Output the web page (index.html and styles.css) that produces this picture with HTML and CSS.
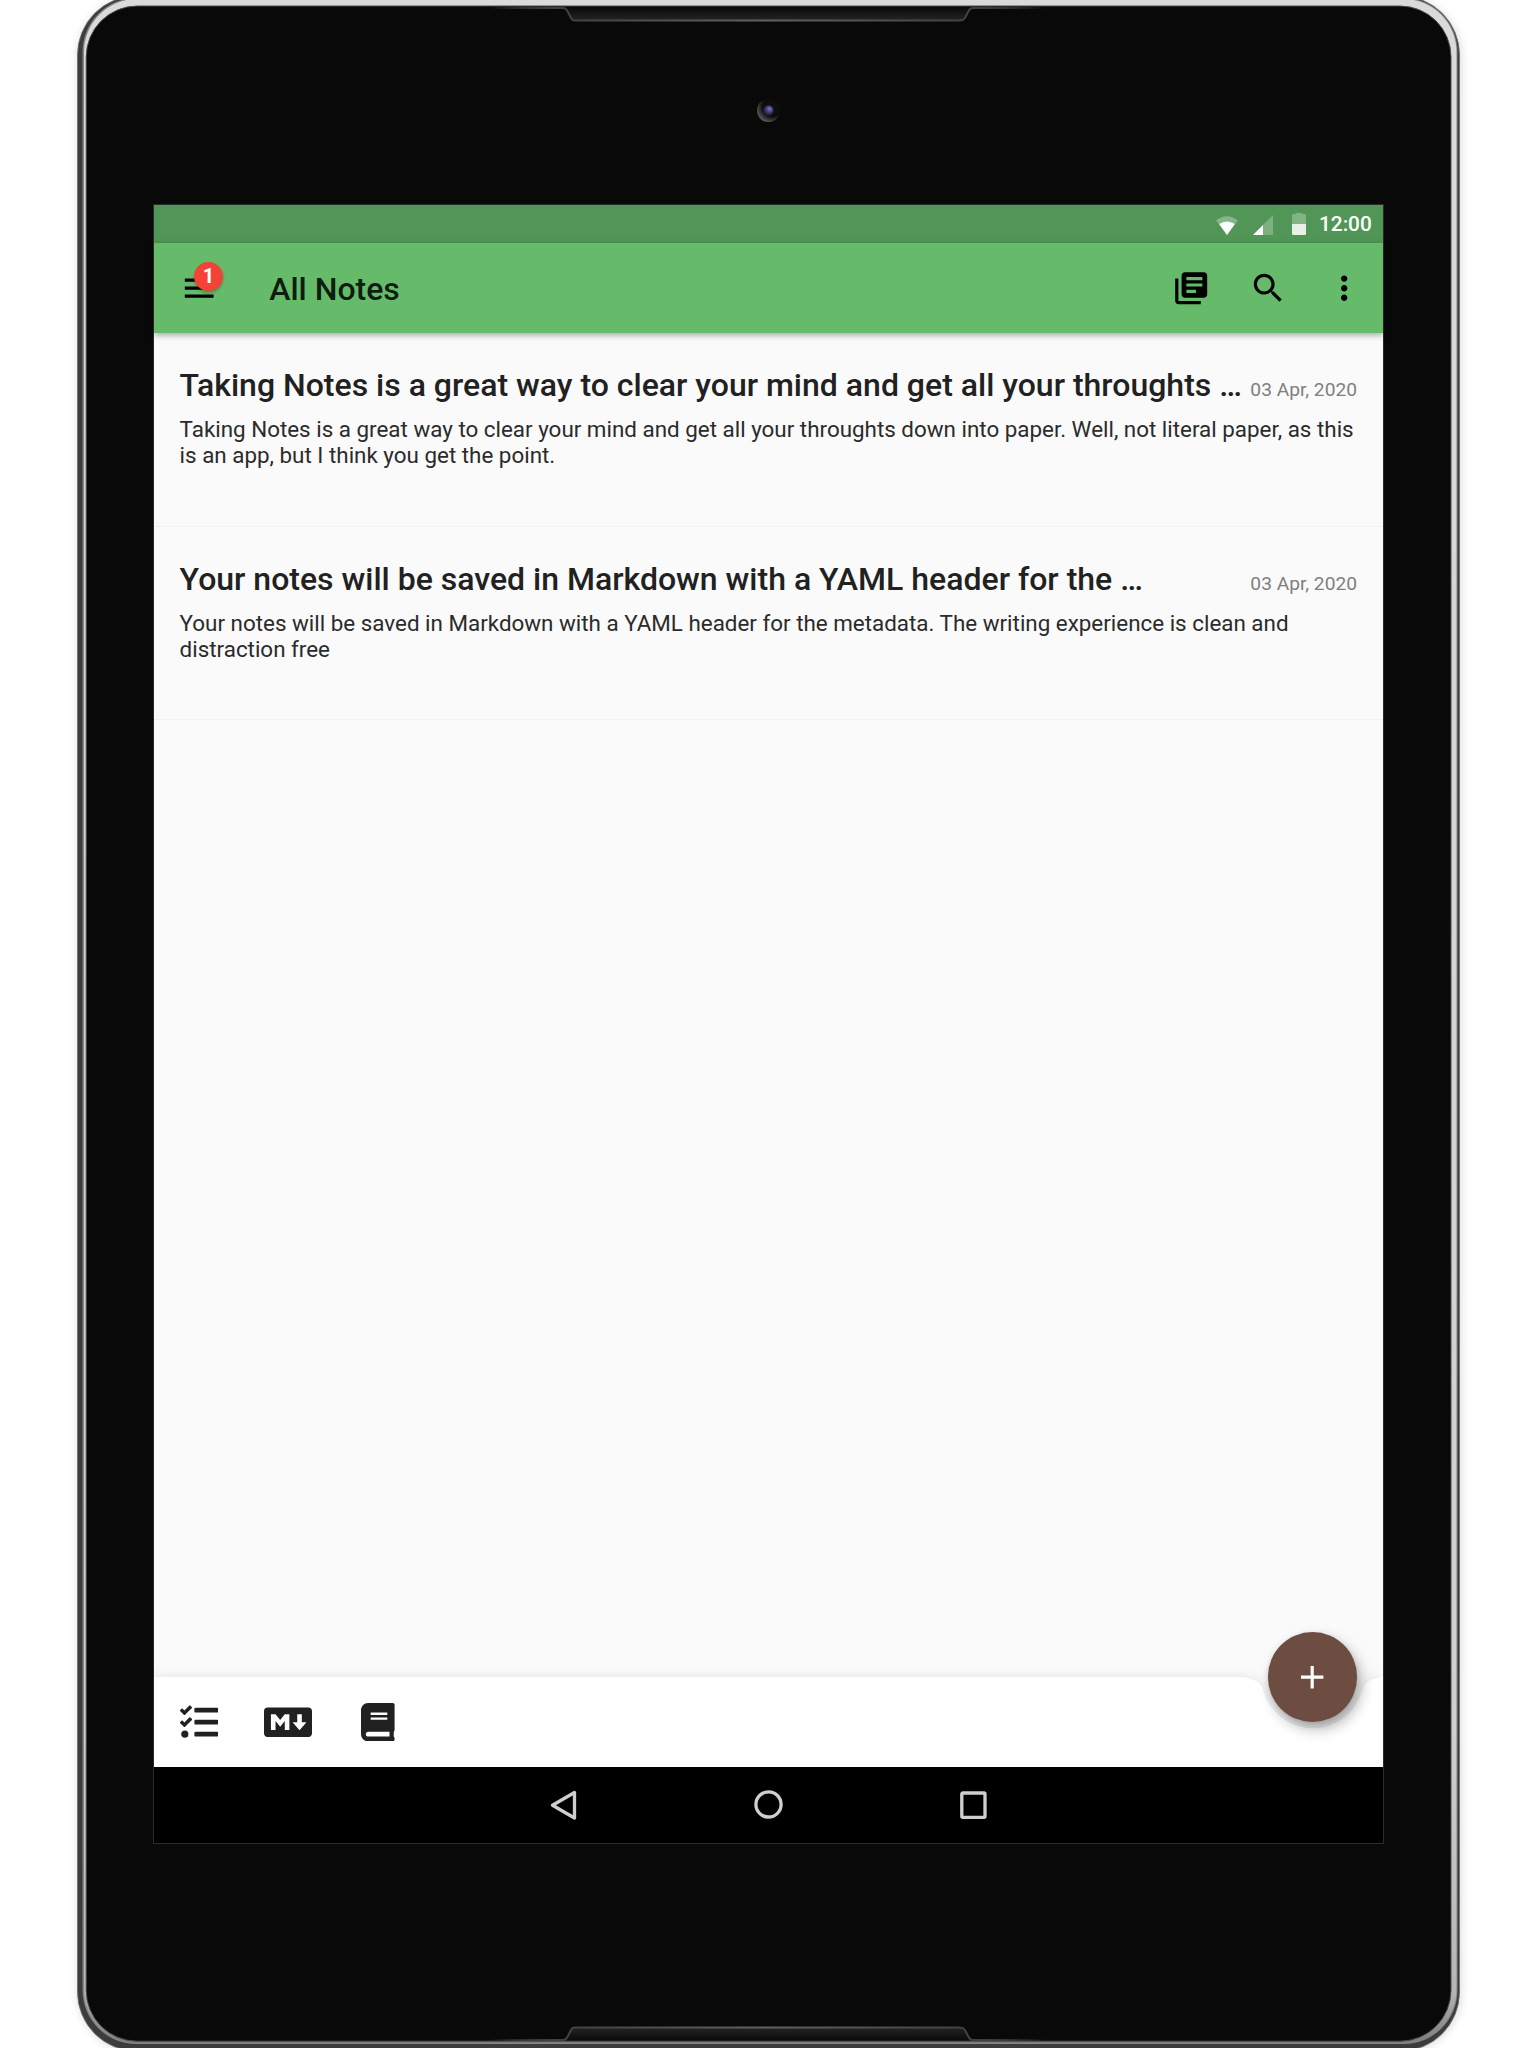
FILE: index.html
```html
<!DOCTYPE html>
<html lang="en">
<head>
<meta charset="utf-8">
<title>All Notes</title>
<link rel="stylesheet" href="styles.css">
</head>
<body>
<div class="device">
  <svg class="frame" width="1536" height="2048" viewBox="0 0 1536 2048" aria-hidden="true">
    <defs>
      <linearGradient id="rim" x1="0" y1="0" x2="0" y2="1"><stop offset="0" stop-color="#dadada"/><stop offset=".85" stop-color="#cfcfcf"/><stop offset=".975" stop-color="#b5b5b5"/><stop offset="1" stop-color="#7c7c7c"/></linearGradient>
      <linearGradient id="slot" x1="0" y1="0" x2="0" y2="1"><stop offset="0" stop-color="#0b0b0b"/><stop offset="1" stop-color="#242424"/></linearGradient>
      <linearGradient id="slot-low" x1="0" y1="1" x2="0" y2="0"><stop offset="0" stop-color="#0b0b0b"/><stop offset="1" stop-color="#242424"/></linearGradient>
      <linearGradient id="edge" x1="0" y1="0" x2="1" y2="0"><stop offset="0" stop-color="#666" stop-opacity="0"/><stop offset=".12" stop-color="#404040"/><stop offset=".5" stop-color="#606060"/><stop offset=".88" stop-color="#404040"/><stop offset="1" stop-color="#666" stop-opacity="0"/></linearGradient>
      <radialGradient id="lens" cx=".68" cy=".32" r=".8"><stop offset=".55" stop-color="#0d0d0d"/><stop offset="1" stop-color="#6a6a6a"/></radialGradient>
      <radialGradient id="glass" cx=".6" cy=".35" r=".6"><stop offset="0" stop-color="#8278b4"/><stop offset=".5" stop-color="#3c4480"/><stop offset="1" stop-color="#20213c"/></radialGradient>
    </defs>
    <rect x="77.5" y="-4" width="1382" height="2055" rx="59" fill="#3c3c3c" stroke="#6d6d6d" stroke-width=".8"/>
    <rect x="82.5" y="-2" width="1375" height="2046" rx="54" fill="#858585"/>
    <rect x="84" y="-1" width="1372.5" height="2044" rx="53" fill="url(#rim)"/>
    <rect x="86.2" y="6" width="1364.8" height="2035.200" rx="51" fill="#090909" stroke="#4a4d4a" stroke-width="1"/>
    <path d="M490 8H563Q566 8 568 12L571 18Q572 20.500 575 20.500H960Q963 20.500 965 18L968 12Q970 8 973 8H1045" fill="url(#slot)" stroke="url(#edge)" stroke-width="2"/>
    <path d="M490 2040H563Q566 2040 568 2036L571 2030Q572 2027.500 575 2027.500H960Q963 2027.500 965 2030L968 2036Q970 2040 973 2040H1045" fill="url(#slot-low)" stroke="url(#edge)" stroke-width="2"/>
    <circle cx="768.5" cy="110.500" r="11.500" fill="url(#lens)"/>
    <circle cx="768.5" cy="110.500" r="5" fill="url(#glass)"/>
  </svg>
  <main class="screen">
    <div class="status">
      <svg class="wifi" width="22" height="19" viewBox="0 0 22 19"><path d="M0 4.500Q11-4 22 4.500L11 19z" fill="#fff" opacity=".3"/><path d="M3.200 8Q11 3 18.800 8L11 19z" fill="#fff"/></svg>
      <svg class="signal" width="20" height="20" viewBox="0 0 20 20"><path d="M20 0V20H0z" fill="#fff" opacity=".25"/><path d="M10 10V20H0z" fill="#fff"/></svg>
      <svg class="battery" width="14" height="22" viewBox="0 0 14 22"><path d="M4 0H10V1H12.500Q14 1 14 2.500V11H0V2.500Q0 1 1.500 1H4z" fill="#fff" opacity=".28"/><path d="M0 11H14V20.500Q14 22 12.500 22H1.500Q0 22 0 20.500z" fill="#e9f0e9"/></svg>
      <span class="clock">12:00</span>
    </div>
    <header class="appbar">
      <div class="menu">
        <svg class="icon" viewBox="0 0 24 24"><path d="M3 18h18v-2H3v2zm0-5h18v-2H3v2zm0-7v2h18V6H3z"/></svg>
        <span class="badge">1</span>
      </div>
      <h1 class="heading">All Notes</h1>
      <div class="action"><svg class="icon" viewBox="0 0 24 24"><path d="M4 6H2v14c0 1.100.9 2 2 2h14v-2H4V6zm16-4H8c-1.100 0-2 .9-2 2v12c0 1.100.9 2 2 2h12c1.100 0 2-.9 2-2V4c0-1.100-.9-2-2-2zm-1 9H9V9h10v2zm-4 4H9v-2h6v2zm4-8H9V5h10v2z"/></svg></div>
      <div class="action"><svg class="icon" viewBox="0 0 24 24"><path d="M15.500 14h-.79l-.28-.27C15.410 12.590 16 11.110 16 9.500 16 5.910 13.090 3 9.500 3S3 5.910 3 9.500 5.910 16 9.500 16c1.610 0 3.090-.59 4.230-1.570l.27.28v.79l5 4.990L20.490 19l-4.990-5zm-6 0C7.010 14 5 11.990 5 9.500S7.010 5 9.500 5 14 7.010 14 9.500 11.990 14 9.500 14z"/></svg></div>
      <div class="action"><svg class="icon" viewBox="0 0 24 24"><path d="M12 8c1.100 0 2-.9 2-2s-.9-2-2-2-2 .9-2 2 .9 2 2 2zm0 2c-1.100 0-2 .9-2 2s.9 2 2 2 2-.9 2-2-.9-2-2-2zm0 6c-1.100 0-2 .9-2 2s.9 2 2 2 2-.9 2-2-.9-2-2-2z"/></svg></div>
    </header>
    <section class="notes">
      <article class="note">
        <div class="note-head"><h2 class="note-title">Taking Notes is a great way to clear your mind and get all your throughts …</h2><time class="note-date">03 Apr, 2020</time></div>
        <p class="note-body">Taking Notes is a great way to clear your mind and get all your throughts down into paper. Well, not literal paper, as this<br>is an app, but I think you get the point.</p>
      </article>
      <article class="note">
        <div class="note-head"><h2 class="note-title">Your notes will be saved in Markdown with a YAML header for the …</h2><time class="note-date">03 Apr, 2020</time></div>
        <p class="note-body">Your notes will be saved in Markdown with a YAML header for the metadata. The writing experience is clean and<br>distraction free</p>
      </article>
    </section>
    <footer class="toolbar">
      <svg class="toolbar-shape" width="1229" height="90" viewBox="0 0 1228.8 90"><path d="M0 0H1081.800Q1105.800 0 1108.950 12.500A51.200 51.200 0 0 0 1208.250 12.500Q1211.400 0 1235.400 0V90H0z" fill="#fff"/></svg>
      <svg class="tool" width="38.400" height="38.400" viewBox="0 0 512 512"><path d="M139.610 35.500a12 12 0 0 0-17 0L58.930 98.810l-22.700-22.120a12 12 0 0 0-17 0L3.530 92.410a12 12 0 0 0 0 17l47.590 47.400a12.780 12.780 0 0 0 17.610 0l15.590-15.620L156.520 69a12.090 12.090 0 0 0 .09-17zm0 159.190a12 12 0 0 0-17 0l-63.680 63.720-22.700-22.100a12 12 0 0 0-17 0L3.530 252a12 12 0 0 0 0 17L51 316.500a12.770 12.770 0 0 0 17.600 0l15.700-15.690 72.200-72.220a12 12 0 0 0 .09-16.900zM64 368c-26.490 0-48.590 21.500-48.590 48S37.530 464 64 464a48 48 0 0 0 0-96zm432 16H208a16 16 0 0 0-16 16v32a16 16 0 0 0 16 16h288a16 16 0 0 0 16-16v-32a16 16 0 0 0-16-16zm0-320H208a16 16 0 0 0-16 16v32a16 16 0 0 0 16 16h288a16 16 0 0 0 16-16V80a16 16 0 0 0-16-16zm0 160H208a16 16 0 0 0-16 16v32a16 16 0 0 0 16 16h288a16 16 0 0 0 16-16v-32a16 16 0 0 0-16-16z"/></svg>
      <svg class="tool" width="48" height="38.400" viewBox="0 0 640 512"><path d="M593.800 59.100H46.200C20.700 59.100 0 79.800 0 105.200v301.500c0 25.500 20.700 46.200 46.200 46.200h547.700c25.500 0 46.200-20.700 46.100-46.100V105.200c0-25.400-20.700-46.100-46.200-46.100zM338.500 360.600H277v-120l-61.500 76.900-61.500-76.900v120H92.300V151.400h61.500l61.500 76.900 61.500-76.900h61.500v209.200zm135.300 3.100L381.500 256H443V151.400h61.500V256H566z"/></svg>
      <svg class="tool tool-book" width="33.600" height="38.400" viewBox="0 0 448 512"><path d="M448 360V24c0-13.300-10.700-24-24-24H96C43 0 0 43 0 96v320c0 53 43 96 96 96h328c13.300 0 24-10.700 24-24v-16c0-7.500-3.500-14.300-8.900-18.700-4.200-15.400-4.200-59.300 0-74.700 5.400-4.300 8.900-11.100 8.900-18.600zM128 134c0-3.300 2.700-6 6-6h212c3.300 0 6 2.700 6 6v20c0 3.300-2.700 6-6 6H134c-3.300 0-6-2.700-6-6v-20zm0 64c0-3.300 2.700-6 6-6h212c3.300 0 6 2.700 6 6v20c0 3.300-2.700 6-6 6H134c-3.300 0-6-2.700-6-6v-20zm253.400 250H96c-17.700 0-32-14.300-32-32 0-17.600 14.400-32 32-32h285.400c-1.900 17.100-1.900 46.900 0 64z"/></svg>
      <div class="fab"><svg class="icon" viewBox="0 0 24 24" fill="#fff"><path d="M19 13h-6v6h-2v-6H5v-2h6V5h2v6h6v2z"/></svg></div>
    </footer>
    <nav class="navbar">
      <svg width="30" height="30" viewBox="0 0 30 30"><path d="M3.500 15.200L25.500 2.500V28z"/></svg>
      <svg width="30" height="30" viewBox="0 0 30 30"><circle cx="14.500" cy="14.400" r="12.600"/></svg>
      <svg width="30" height="30" viewBox="0 0 30 30"><rect x="3.800" y="3" width="23.200" height="24.300" rx="1"/></svg>
    </nav>
  </main>
</div>
</body>
</html>
```
FILE: styles.css
```css
* { box-sizing: border-box; }
body { margin: 0; background: #fff; font-family: Roboto, "Liberation Sans", sans-serif; }
.device { position: relative; width: 1536px; height: 2048px; overflow: hidden; padding: 205px 0 0 154px; }
.frame { position: absolute; left: 0; top: 0; filter: drop-shadow(1px 1px 4px rgba(0,0,0,.15)); }
.screen { position: relative; width: 1229px; height: 1638px; display: flex; flex-direction: column; background: #fafafa; color: #212121; outline: 1px solid #2b2b2b; }
h1, h2, p { margin: 0; font-weight: inherit; }
.icon { display: block; width: 38.4px; height: 38.4px; }

.status { height: 38px; flex: none; background: #519657; display: flex; align-items: center; padding-right: 12px; color: #fff; }
.wifi { margin-left: auto; margin-top: 2px; }
.signal { margin-left: 15px; margin-top: 1px; }
.battery { margin-left: 19px; }
.clock { margin-left: 13px; width: 52px; font-size: 20.8px; font-weight: 500; text-align: right; }

.appbar { height: 90px; flex: none; background: #66bb6a; display: flex; align-items: center; box-shadow: 0 2px 6px rgba(0,0,0,.35); z-index: 1; }
.menu { position: relative; width: 89.6px; display: flex; justify-content: center; }
.badge { position: absolute; left: 40px; top: -7px; width: 29px; height: 29px; border-radius: 50%; background: #f44336; color: #fff; font-size: 20px; line-height: 29px; font-weight: 700; text-align: center; box-shadow: 0 2px 3px rgba(0,0,0,.25); }
.heading { flex: 1; padding: 1px 0 0 25.6px; font-size: 32px; font-weight: 500; color: rgba(0,0,0,.87); }
.action { width: 76.8px; display: flex; justify-content: center; }

.notes { flex: 1; }
.note { height: 193.6px; padding: 33px 26px 0 25.6px; border-bottom: 1px solid #f2f2f2; }
.note-head { display: flex; justify-content: space-between; align-items: baseline; white-space: nowrap; }
.note-title { font-size: 32px; line-height: 38px; font-weight: 500; }
.note-date { font-size: 19.2px; color: #7f7f7f; }
.note-body { margin-top: 12px; font-size: 22.4px; line-height: 26px; white-space: nowrap; color: #2b2b2b; }

.toolbar { position: relative; height: 90px; flex: none; display: flex; align-items: center; gap: 46px; padding-left: 25.6px; }
.toolbar-shape { position: absolute; left: 0; top: 0; filter: drop-shadow(0 0 6px rgba(0,0,0,.09)); clip-path: inset(-20px 0 0 0); overflow: hidden; }
.tool { position: relative; fill: #212121; }
.tool-book { margin-left: 3px; }
.fab { position: absolute; right: 25.6px; top: -44.6px; width: 89.6px; height: 89.6px; border-radius: 50%; background: #6d4c41; display: flex; align-items: center; justify-content: center; box-shadow: 4px 7px 14px rgba(0,0,0,.3), 0 2px 5px rgba(0,0,0,.12); }

.navbar { height: 76px; flex: none; background: #000; display: flex; align-items: center; justify-content: center; gap: 174.5px; fill: none; stroke: #cfcfcf; stroke-width: 3.3; stroke-linejoin: round; }
```
